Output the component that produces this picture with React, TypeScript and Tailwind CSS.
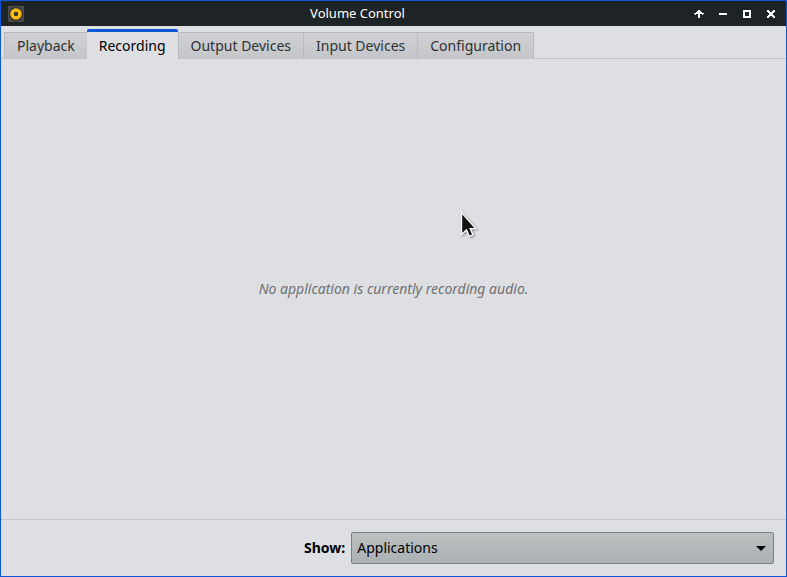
import { useState } from "react";
import clsx from "clsx";

const TABS = [
  { name: "Playback", empty: "No application is currently playing audio." },
  { name: "Recording", empty: "No application is currently recording audio." },
  { name: "Output Devices", empty: "No output devices available" },
  { name: "Input Devices", empty: "No input devices available" },
  { name: "Configuration", empty: "No cards available for configuration" },
];

const CONTROLS = [
  { label: "Shade", path: "M5 1h2v1h1v1h1v1h2v1h-1v1H9V5H7v4H5V5H3v1H2V5H1V4h2V3h1V2h1z" },
  { label: "Minimize", path: "M2 4h8v2H2z" },
  { label: "Maximize", path: "M2 1h8v8H2zM4 3v4h4V3z" },
  { label: "Close", path: "M2 1h2v1h1v1h2V2h1V1h2v2H9v1H8v2h1v1h1v2H8V8H7V7H5v1H4v1H2V7h1V6h1V4H3V3H2z" },
];

function AppIcon() {
  return (
    <svg width="16" height="16" viewBox="0 0 16 16" aria-hidden="true">
      <rect width="16" height="16" fill="#4c4c4c" />
      <circle cx="8" cy="8" r="7" fill="#2b2b2b" />
      <circle cx="8" cy="8" r="4" fill="none" stroke="#fdbc12" strokeWidth="3.6" />
      <circle cx="8" cy="8" r="1.8" fill="#3c3c3c" />
    </svg>
  );
}

function Pointer() {
  return (
    <svg
      className="absolute left-[459px] top-[209px] pointer-events-none drop-shadow-[1px_1px_1px_rgba(0,0,0,0.4)]"
      width="20"
      height="29"
      viewBox="0 0 20 29"
      aria-hidden="true"
    >
      <path
        d="M1.5 2.5v22l5-4.6 2.8 6.4 3.6-1.5-2.7-6.2h5.6z"
        fill="#111"
        stroke="#fff"
        strokeWidth="1.4"
      />
    </svg>
  );
}

export default function App() {
  const [active, setActive] = useState(1);

  return (
    <div className="relative min-h-screen flex flex-col border border-[#0f56d9] bg-[#dedfe3] font-['Noto_Sans',sans-serif] text-sm text-black">
      <header className="flex items-center h-[25px] pl-[7px] pr-[3px] bg-[#1e2326] text-white">
        <AppIcon />
        <h1 className="flex-1 pl-1 text-center text-[13px]">Volume Control</h1>
        {CONTROLS.map((c) => (
          <button key={c.label} aria-label={c.label} className="flex justify-center w-6">
            <svg width="12" height="10" viewBox="0 0 12 10" fill="currentColor" fillRule="evenodd" shapeRendering="crispEdges">
              <path d={c.path} />
            </svg>
          </button>
        ))}
      </header>

      <div role="tablist" className="flex items-end pt-[3px] px-[3px] border-b border-[#c4c5c9]">
        {TABS.map((tab, i) => (
          <button
            key={tab.name}
            role="tab"
            aria-selected={i === active}
            onClick={() => setActive(i)}
            className={clsx(
              "-mb-px px-3 whitespace-nowrap",
              i === active
                ? "h-[30px] rounded-t-xs border-t-3 border-[#0f56d9] bg-[#dedfe3]"
                : "h-[27px] border-t border-l last:border-r border-[#b9babd] bg-linear-to-b from-[#cfd0d3] to-[#c5c6c9] text-[#2e3133]"
            )}
          >
            {tab.name}
          </button>
        ))}
      </div>

      <main className="flex-1 flex items-center justify-center">
        <p className="italic text-[#6f7173]">{TABS[active].empty}</p>
      </main>

      <footer className="flex items-center justify-end gap-[6px] p-3 border-t border-[#c4c5c9]">
        <label htmlFor="show" className="font-bold">Show:</label>
        <div className="relative w-5/9">
          <select
            id="show"
            className="block w-full h-8 pl-[5px] pr-8 appearance-none rounded-xs border border-[#7b8083] bg-linear-to-b from-[#bbc0c1] to-[#abb1b2]"
          >
            <option>Applications</option>
            <option>Virtual Streams</option>
            <option>All Streams</option>
          </select>
          <svg className="absolute right-2 top-[14px] pointer-events-none" width="10" height="5" viewBox="0 0 10 5" aria-hidden="true">
            <path d="M0 0h10L5 5z" />
          </svg>
        </div>
      </footer>

      <Pointer />
    </div>
  );
}
